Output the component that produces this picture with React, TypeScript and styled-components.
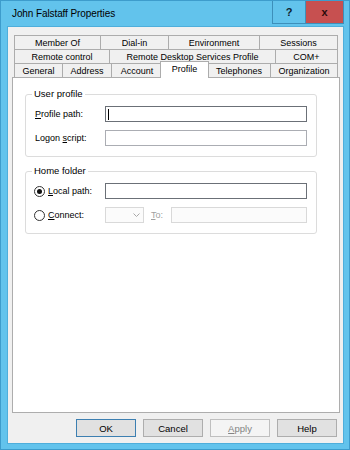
import React from "react";
import styled, { createGlobalStyle, css } from "styled-components";

const Global = createGlobalStyle`
  html, body { margin: 0; padding: 0; background: #ffffff; }
  body { font-family: "Liberation Sans", Arial, sans-serif; font-size: 9px; color: #000; }
  * { box-sizing: border-box; }
`;

const Window = styled.div`
  width: 350px;
  height: 450px;
  border: 1px solid #3d9ccc;
  background: #62c3ec;
  display: flex;
  flex-direction: column;
`;

const TitleBar = styled.div`
  height: 26px;
  display: flex;
  align-items: flex-start;
  padding-right: 5px;
`;

const Title = styled.div`
  flex: 1;
  padding-left: 11px;
  line-height: 26px;
  font-size: 10px;
  color: #000;
  letter-spacing: -0.1px;
`;

const CaptionButton = styled.div<{ $close?: boolean }>`
  height: 23px;
  width: ${(p) => (p.$close ? 38 : 34)}px;
  display: flex;
  align-items: center;
  justify-content: center;
  font-weight: bold;
  font-size: 11px;
  color: ${(p) => (p.$close ? "#2b0a0a" : "#0c2230")};
  background: ${(p) => (p.$close ? "#c75050" : "#62c3ec")};
  border: 1px solid #3d8fba;
  border-top: none;
  ${(p) => (p.$close ? css`border-left: none;` : "")}
`;

const Client = styled.div`
  flex: 1;
  margin: 0 6px 6px 7px;
  background: #f0f0f0;
  box-shadow: 0 0 0 1px #4eaedb;
  padding: 8px 3px 6px 4px;
  display: flex;
  flex-direction: column;
`;

const TabStrip = styled.div`
  margin: 0 2px;
  display: flex;
  flex-direction: column;
`;

const TabRow = styled.div`
  display: flex;
  height: 14px;
`;

const Tab = styled.div<{ $w: number; $active?: boolean }>`
  width: ${(p) => p.$w}px;
  flex: none;
  display: flex;
  align-items: center;
  justify-content: center;
  background: #f0f0f0;
  border-top: 1px solid #acacac;
  border-left: 1px solid #acacac;
  white-space: nowrap;
  &:last-child { border-right: 1px solid #acacac; }
  ${(p) =>
    p.$active &&
    css`
      width: ${p.$w + 4}px;
      margin: -2px -2px -1px;
      height: 17px;
      position: relative;
      z-index: 1;
      background: #ffffff;
      border-right: 1px solid #acacac;
      align-items: flex-start;
      padding-top: 2px;
    `}
`;

const Panel = styled.div`
  flex: 1;
  background: #ffffff;
  border: 1px solid #adadad;
  padding: 16px 22px 0 12px;
  display: flex;
  flex-direction: column;
  gap: 14px;
`;

const GroupBox = styled.div`
  border: 1px solid #dcdcdc;
  border-radius: 3px;
  padding: 0 9px 10px 9px;
  display: flex;
  flex-direction: column;
  gap: 8px;
`;

const GroupCaption = styled.div`
  align-self: flex-start;
  margin: -7px 0 -2px -3px;
  padding: 0 2px;
  background: #ffffff;
  line-height: 12px;
  font-size: 9.5px;
`;

const FieldRow = styled.div`
  display: flex;
  align-items: center;
  height: 16px;
`;

const Label = styled.div`
  width: 70px;
  flex: none;
  display: flex;
  align-items: center;
  gap: 3px;
  padding-left: 0;
`;

const Key = styled.span`
  text-decoration: underline;
  text-underline-offset: 1px;
`;

const TextInput = styled.div<{ $focus?: boolean; $disabled?: boolean; $w?: number }>`
  height: 16px;
  ${(p) => (p.$w ? css`width: ${p.$w}px; flex: none;` : css`flex: 1;`)}
  border: 1px solid ${(p) => (p.$disabled ? "#d9d9d9" : p.$focus ? "#6b7077" : "#abadb3")};
  background: ${(p) => (p.$disabled ? "#fbfbfb" : "#fff")};
  position: relative;
  display: flex;
  align-items: center;
  padding-left: 2px;
`;

const Caret = styled.span`
  width: 1px;
  height: 11px;
  background: #000;
`;

const Radio = styled.span<{ $on?: boolean }>`
  width: 11px;
  height: 11px;
  border-radius: 50%;
  border: 1px solid #333;
  background: #fff;
  display: inline-flex;
  align-items: center;
  justify-content: center;
  flex: none;
  &::after {
    content: "";
    width: 5px;
    height: 5px;
    border-radius: 50%;
    background: ${(p) => (p.$on ? "#111" : "transparent")};
  }
`;

const RadioLabel = styled(Label)`
  margin-left: -1px;
  width: 71px;
`;

const Combo = styled.div`
  width: 39px;
  height: 16px;
  flex: none;
  border: 1px solid #d9d9d9;
  background: #fbfbfb;
  display: flex;
  align-items: center;
  justify-content: flex-end;
  padding-right: 3px;
`;

const ToLabel = styled.span`
  color: #a0a0a0;
  margin: 0 8px 0 7px;
`;

const ButtonBar = styled.div`
  display: flex;
  justify-content: flex-end;
  gap: 7px;
  margin-top: 6px;
  padding-right: 3px;
`;

const Button = styled.div<{ $default?: boolean; $disabled?: boolean }>`
  width: 60px;
  height: 18px;
  display: flex;
  align-items: center;
  justify-content: center;
  background: ${(p) => (p.$disabled ? "#f4f4f4" : "#e1e1e1")};
  border: 1px solid ${(p) => (p.$disabled ? "#bfbfbf" : p.$default ? "#3c7fb1" : "#adadad")};
  color: ${(p) => (p.$disabled ? "#838383" : "#000")};
  font-size: 9.5px;
`;

const rows: { label: string; w: number; active?: boolean }[][] = [
  [
    { label: "Member Of", w: 86 },
    { label: "Dial-in", w: 68 },
    { label: "Environment", w: 91 },
    { label: "Sessions", w: 79 },
  ],
  [
    { label: "Remote control", w: 95 },
    { label: "Remote Desktop Services Profile", w: 166 },
    { label: "COM+", w: 63 },
  ],
  [
    { label: "General", w: 48 },
    { label: "Address", w: 49 },
    { label: "Account", w: 51 },
    { label: "Profile", w: 45, active: true },
    { label: "Telephones", w: 63 },
    { label: "Organization", w: 68 },
  ],
];

export default function App() {
  return (
    <>
      <Global />
      <Window>
        <TitleBar>
          <Title>John Falstaff Properties</Title>
          <CaptionButton>?</CaptionButton>
          <CaptionButton $close>x</CaptionButton>
        </TitleBar>
        <Client>
          <TabStrip>
            {rows.map((r, i) => (
              <TabRow key={i}>
                {r.map((t) => (
                  <Tab key={t.label} $w={t.w} $active={t.active}>
                    {t.label}
                  </Tab>
                ))}
              </TabRow>
            ))}
          </TabStrip>
          <Panel>
            <GroupBox>
              <GroupCaption>User profile</GroupCaption>
              <FieldRow>
                <Label>
                  <span>
                    <Key>P</Key>rofile path:
                  </span>
                </Label>
                <TextInput $focus>
                  <Caret />
                </TextInput>
              </FieldRow>
              <FieldRow>
                <Label>
                  <span>
                    Logon <Key>s</Key>cript:
                  </span>
                </Label>
                <TextInput />
              </FieldRow>
            </GroupBox>
            <GroupBox>
              <GroupCaption>Home folder</GroupCaption>
              <FieldRow>
                <RadioLabel>
                  <Radio $on />
                  <span>
                    <Key>L</Key>ocal path:
                  </span>
                </RadioLabel>
                <TextInput $focus />
              </FieldRow>
              <FieldRow>
                <RadioLabel>
                  <Radio />
                  <span>
                    <Key>C</Key>onnect:
                  </span>
                </RadioLabel>
                <Combo>
                  <svg width="7" height="5" viewBox="0 0 7 5">
                    <path d="M0.5 0.5 L3.5 3.5 L6.5 0.5" fill="none" stroke="#a8a8a8" strokeWidth="1" />
                  </svg>
                </Combo>
                <ToLabel>
                  <Key>T</Key>o:
                </ToLabel>
                <TextInput $disabled />
              </FieldRow>
            </GroupBox>
          </Panel>
          <ButtonBar>
            <Button $default>OK</Button>
            <Button>Cancel</Button>
            <Button $disabled>
              <span>
                <Key>A</Key>pply
              </span>
            </Button>
            <Button>Help</Button>
          </ButtonBar>
        </Client>
      </Window>
    </>
  );
}
